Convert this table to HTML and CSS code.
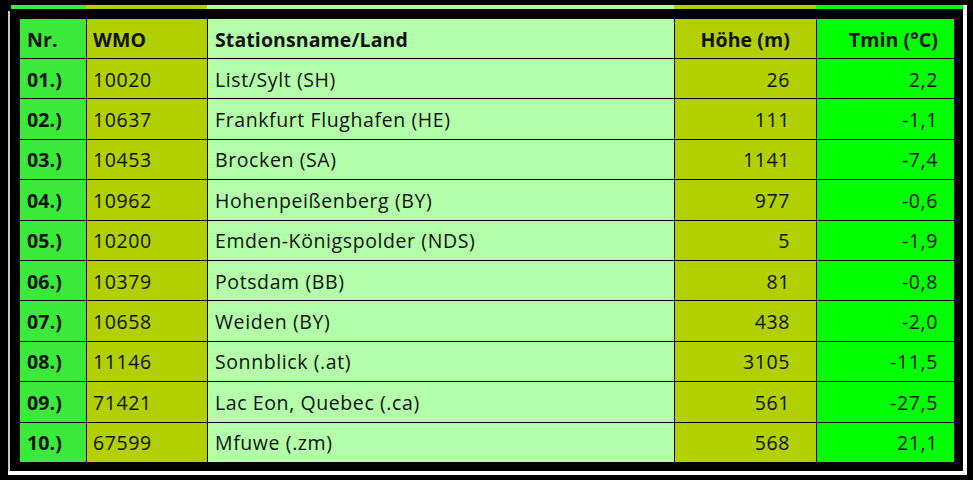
FILE: index.html
```html
<!DOCTYPE html>
<html lang="de">
<head>
<meta charset="utf-8">
<title>Tmin Stationen</title>
<link rel="stylesheet" href="styles.css">
</head>
<body>
<div class="page">
  <div class="frame">
    <div class="strip">
      <span class="s-nr"></span><span class="s-wmo"></span><span class="s-name"></span><span class="s-hoehe"></span><span class="s-tmin"></span>
    </div>
    <div class="inner">
      <div class="grid">
        <div class="c nr h">Nr.</div><div class="c wmo h">WMO</div><div class="c name h">Stationsname/Land</div><div class="c hoehe h">Höhe (m)</div><div class="c tmin h">Tmin (°C)</div>
        <div class="c nr h">01.)</div><div class="c wmo">10020</div><div class="c name">List/Sylt (SH)</div><div class="c hoehe">26</div><div class="c tmin">2,2</div>
        <div class="c nr h">02.)</div><div class="c wmo">10637</div><div class="c name">Frankfurt Flughafen (HE)</div><div class="c hoehe">111</div><div class="c tmin">-1,1</div>
        <div class="c nr h">03.)</div><div class="c wmo">10453</div><div class="c name">Brocken (SA)</div><div class="c hoehe">1141</div><div class="c tmin">-7,4</div>
        <div class="c nr h">04.)</div><div class="c wmo">10962</div><div class="c name">Hohenpeißenberg (BY)</div><div class="c hoehe">977</div><div class="c tmin">-0,6</div>
        <div class="c nr h">05.)</div><div class="c wmo">10200</div><div class="c name">Emden-Königspolder (NDS)</div><div class="c hoehe">5</div><div class="c tmin">-1,9</div>
        <div class="c nr h">06.)</div><div class="c wmo">10379</div><div class="c name">Potsdam (BB)</div><div class="c hoehe">81</div><div class="c tmin">-0,8</div>
        <div class="c nr h">07.)</div><div class="c wmo">10658</div><div class="c name">Weiden (BY)</div><div class="c hoehe">438</div><div class="c tmin">-2,0</div>
        <div class="c nr h">08.)</div><div class="c wmo">11146</div><div class="c name">Sonnblick (.at)</div><div class="c hoehe">3105</div><div class="c tmin">-11,5</div>
        <div class="c nr h">09.)</div><div class="c wmo">71421</div><div class="c name">Lac Eon, Quebec (.ca)</div><div class="c hoehe">561</div><div class="c tmin">-27,5</div>
        <div class="c nr h">10.)</div><div class="c wmo">67599</div><div class="c name">Mfuwe (.zm)</div><div class="c hoehe">568</div><div class="c tmin">21,1</div>
      </div>
    </div>
  </div>
</div>
</body>
</html>
```
FILE: styles.css
```css
html, body {
  margin: 0;
  padding: 0;
  background: #000;
}
.page {
  width: 973px;
  height: 480px;
  background: #000;
  padding-top: 5px;
  box-sizing: border-box;
  font-family: "Open Sans", Lato, sans-serif;
}
.frame {
  margin-left: 8px;
  width: 959px;
  height: 470px;
  box-sizing: border-box;
  border-right: 4px solid #fff;
  border-bottom: 4px solid #fff;
  display: flex;
  flex-direction: column;
}
.strip {
  display: flex;
  height: 4px;
  margin-left: 3px;
  width: 952px;
}
.strip span { display: block; height: 4px; }
.s-nr { width: 75px; background: #3be93b; }
.s-wmo { width: 121px; background: #b2d000; }
.s-name { width: 467px; background: #b3ffaa; }
.s-hoehe { width: 142px; background: #b2d000; }
.s-tmin { width: 147px; background: #00ff00; }
.inner {
  margin-top: 2px;
  flex: 1;
  border-left: 2px solid #c8c8c8;
  padding-left: 10px;
  padding-top: 8px;
}
.grid {
  display: grid;
  grid-template-columns: 66px 120px 466px 141px 137px;
  grid-template-rows: 39px repeat(10, 39.4px);
  gap: 1px;
  background: #000;
  width: 934px;
}
.c {
  display: flex;
  align-items: center;
  font-size: 19.5px;
  letter-spacing: 0.6px;
  color: #111;
  padding-top: 1px;
  box-sizing: border-box;
  white-space: nowrap;
}
.h { font-weight: bold; letter-spacing: 0.1px; }
.nr { background: #3be93b; padding-left: 7px; }
.wmo { background: #b2d000; padding-left: 6px; }
.name { background: #b3ffaa; padding-left: 7px; }
.hoehe { background: #b2d000; justify-content: flex-end; padding-right: 26px; }
.tmin { background: #00ff00; justify-content: flex-end; padding-right: 16px; }
```
